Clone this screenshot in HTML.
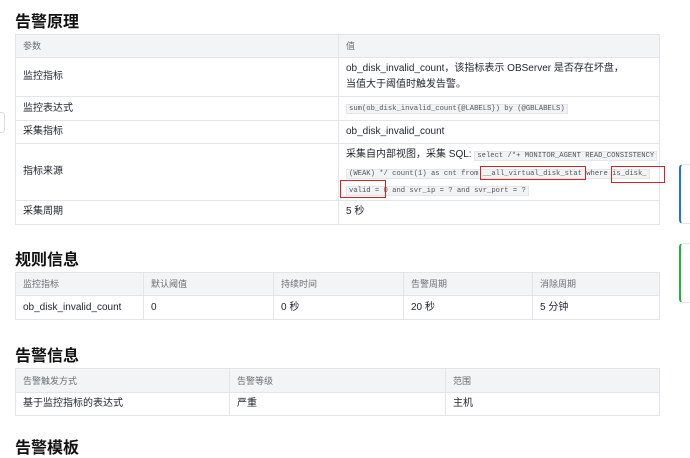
<!DOCTYPE html>
<html><head><meta charset="utf-8"><style>
*{margin:0;padding:0;box-sizing:border-box}
body{width:690px;height:443px;overflow:hidden;background:#fff;font-family:"Liberation Sans","Noto Sans CJK SC",sans-serif;color:#1f2329;position:relative}
h2{position:absolute;left:15px;font-size:16px;font-weight:bold;color:#111}
table{position:absolute;left:15px;width:645px;border-collapse:collapse;font-size:10px;table-layout:fixed}
td,th{border:1px solid #e3e5e8;padding:0 7px;text-align:left;vertical-align:middle;overflow:hidden;line-height:14px}
th{background:#f3f4f6;font-weight:normal;color:#6b7075;font-size:9px}
code{font-family:"Liberation Mono",monospace;font-size:7.2px;background:#f2f3f5;border:1px solid #e5e6e8;padding:0 2px;color:#555;white-space:nowrap}
.sql{line-height:16.5px;white-space:nowrap;padding-right:0;padding-top:3px}
.rb{position:absolute;border:1.5px solid #e02020}
</style></head><body>
<h2 style="top:8px">告警原理</h2>
<table style="top:34px">
<tr style="height:23px"><th style="width:323px">参数</th><th>值</th></tr>
<tr style="height:39px"><td>监控指标</td><td style="line-height:16px">ob_disk_invalid_count，该指标表示 OBServer 是否存在坏盘，<br>当值大于阈值时触发告警。</td></tr>
<tr style="height:24px"><td>监控表达式</td><td><code>sum(ob_disk_invalid_count{@LABELS}) by (@GBLABELS)</code></td></tr>
<tr style="height:23px"><td>采集指标</td><td>ob_disk_invalid_count</td></tr>
<tr style="height:56px"><td>指标来源</td><td class="sql">采集自内部视图，采集 SQL: <code>select /*+ MONITOR_AGENT READ_CONSISTENCY</code><br><code>(WEAK) */ count(1) as cnt from __all_virtual_disk_stat where is_disk_</code><br><code>valid = 0 and svr_ip = ? and svr_port = ?</code></td></tr>
<tr style="height:24px"><td>采集周期</td><td>5 秒</td></tr>
</table>
<div class="rb" style="left:480px;top:166px;width:106px;height:14px"></div>
<div class="rb" style="left:611px;top:166px;width:54px;height:17px"></div>
<div class="rb" style="left:340px;top:180px;width:46px;height:18px"></div>
<div style="position:absolute;left:-4px;top:112px;width:9px;height:21px;border:1px solid #ddd;border-radius:3px"></div>
<div style="position:absolute;left:679px;top:164px;width:20px;height:60px;border:1px solid #e3e5e8;border-left:2px solid #1f6fff;border-radius:4px"></div>
<div style="position:absolute;left:679px;top:243px;width:20px;height:60px;border:1px solid #e3e5e8;border-left:2px solid #22b33a;border-radius:4px"></div>
<h2 style="top:246px">规则信息</h2>
<table style="top:272px">
<tr style="height:23px"><th style="width:128px">监控指标</th><th style="width:130px">默认阈值</th><th style="width:130px">持续时间</th><th style="width:129px">告警周期</th><th>消除周期</th></tr>
<tr style="height:24px"><td>ob_disk_invalid_count</td><td>0</td><td>0 秒</td><td>20 秒</td><td>5 分钟</td></tr>
</table>
<h2 style="top:342px">告警信息</h2>
<table style="top:368px">
<tr style="height:24px"><th style="width:214px">告警触发方式</th><th style="width:216px">告警等级</th><th>范围</th></tr>
<tr style="height:23px"><td>基于监控指标的表达式</td><td>严重</td><td>主机</td></tr>
</table>
<h2 style="top:434px">告警模板</h2>
</body></html>
